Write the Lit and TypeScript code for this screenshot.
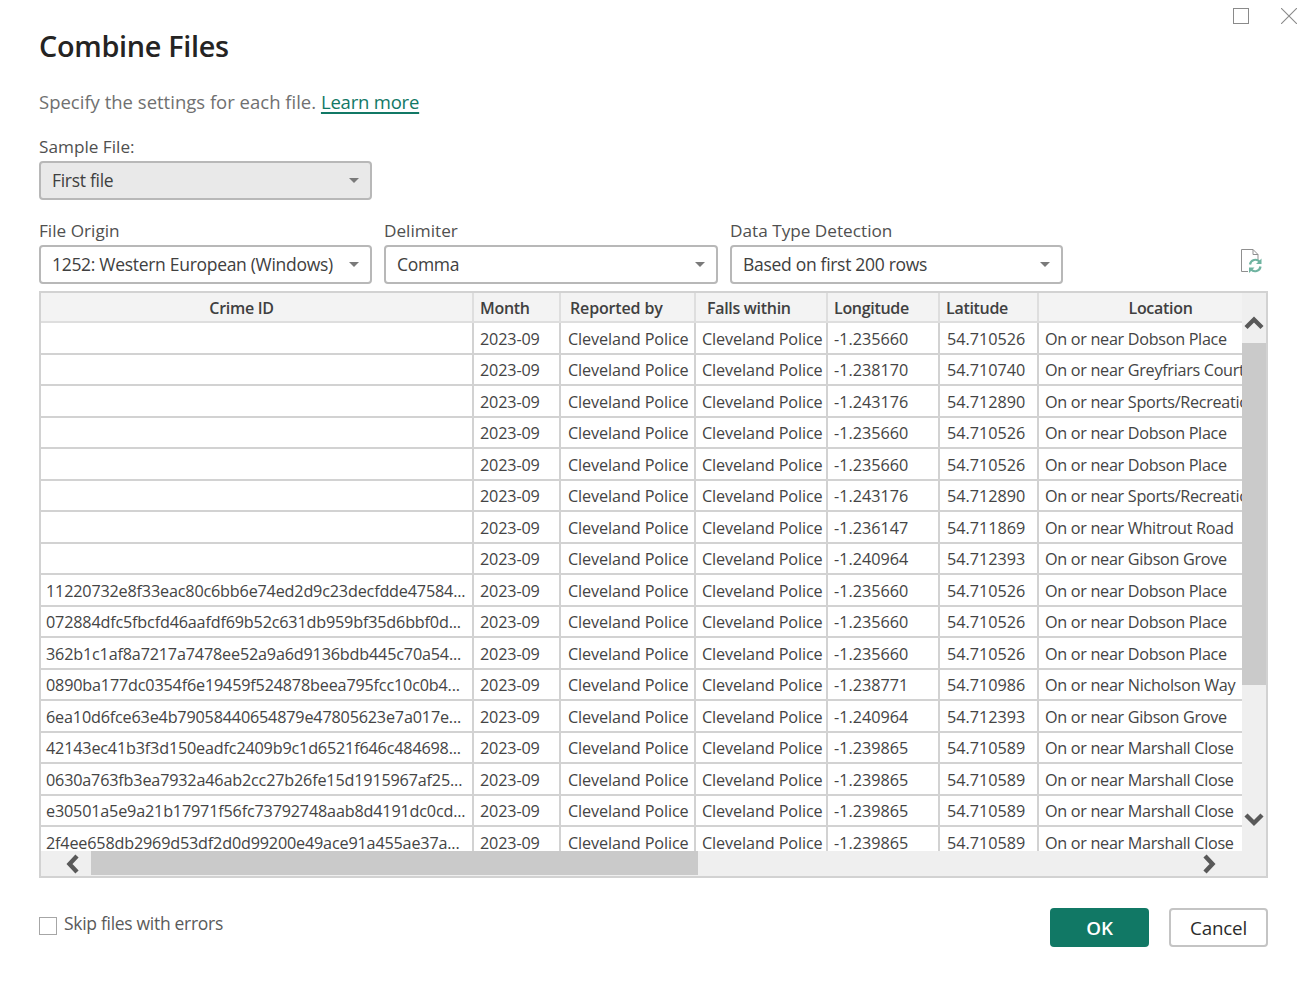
import { LitElement, css, html, svg } from "lit";
import { customElement } from "lit/decorators.js";

type Row = { id: string; lon: string; lat: string; loc: string };

const DOBSON = "On or near Dobson Place";
const GIBSON = "On or near Gibson Grove";
const SPORTS = "On or near Sports/Recreation Area";
const MARSHALL = "On or near Marshall Close";

const rows: Row[] = [
  { id: "", lon: "-1.235660", lat: "54.710526", loc: DOBSON },
  { id: "", lon: "-1.238170", lat: "54.710740", loc: "On or near Greyfriars Court" },
  { id: "", lon: "-1.243176", lat: "54.712890", loc: SPORTS },
  { id: "", lon: "-1.235660", lat: "54.710526", loc: DOBSON },
  { id: "", lon: "-1.235660", lat: "54.710526", loc: DOBSON },
  { id: "", lon: "-1.243176", lat: "54.712890", loc: SPORTS },
  { id: "", lon: "-1.236147", lat: "54.711869", loc: "On or near Whitrout Road" },
  { id: "", lon: "-1.240964", lat: "54.712393", loc: GIBSON },
  { id: "11220732e8f33eac80c6bb6e74ed2d9c23decfdde47584...", lon: "-1.235660", lat: "54.710526", loc: DOBSON },
  { id: "072884dfc5fbcfd46aafdf69b52c631db959bf35d6bbf0d...", lon: "-1.235660", lat: "54.710526", loc: DOBSON },
  { id: "362b1c1af8a7217a7478ee52a9a6d9136bdb445c70a54...", lon: "-1.235660", lat: "54.710526", loc: DOBSON },
  { id: "0890ba177dc0354f6e19459f524878beea795fcc10c0b4...", lon: "-1.238771", lat: "54.710986", loc: "On or near Nicholson Way" },
  { id: "6ea10d6fce63e4b79058440654879e47805623e7a017e...", lon: "-1.240964", lat: "54.712393", loc: GIBSON },
  { id: "42143ec41b3f3d150eadfc2409b9c1d6521f646c484698...", lon: "-1.239865", lat: "54.710589", loc: MARSHALL },
  { id: "0630a763fb3ea7932a46ab2cc27b26fe15d1915967af25...", lon: "-1.239865", lat: "54.710589", loc: MARSHALL },
  { id: "e30501a5e9a21b17971f56fc73792748aab8d4191dc0cd...", lon: "-1.239865", lat: "54.710589", loc: MARSHALL },
  { id: "2f4ee658db2969d53df2d0d99200e49ace91a455ae37a...", lon: "-1.239865", lat: "54.710589", loc: MARSHALL },
];

const caret = html`<svg class="caret" width="10" height="5" viewBox="0 0 10 5"><path d="M0 0h10L5 5z" fill="#7a7a7a"/></svg>`;

const chevron = (d: string) =>
  svg`<svg width="20" height="20" viewBox="0 0 20 20"><path d=${d} fill="none" stroke="#595959" stroke-width="4.4"/></svg>`;

@customElement("app-root")
export class AppRoot extends LitElement {
  static styles = css`
    :host {
      display: block;
      width: 1304px;
      height: 982px;
      box-sizing: border-box;
      padding: 8px 36px 0 39px;
      background: #fff;
      color: #333;
      font-family: "Open Sans", "Noto Sans", sans-serif;
      font-size: 17px;
      position: relative;
      overflow: hidden;
    }

    .winbar {
      display: flex;
      justify-content: flex-end;
      gap: 32px;
      height: 16px;
      margin-right: -29px;
    }

    h1 {
      margin: 3px 0 0;
      font-size: 28.8px;
      font-weight: 600;
      line-height: 38px;
      color: #252423;
      letter-spacing: -0.3px;
    }

    .hint {
      margin-top: 24px;
      line-height: 26px;
      font-size: 18.5px;
      color: #707070;
    }

    .hint a {
      color: #117865;
      letter-spacing: -0.2px;
      text-decoration: underline 2px #117865;
      text-underline-offset: 3px;
    }

    .label {
      display: block;
      line-height: 22px;
      font-size: 17.2px;
      color: #505050;
      margin-bottom: 3px;
    }

    .sample {
      margin-top: 21px;
      width: 333px;
    }

    .select {
      box-sizing: border-box;
      height: 39px;
      width: 333px;
      border: 2px solid #b8b8b8;
      border-radius: 4px;
      padding: 0 11px 2px;
      display: flex;
      align-items: center;
      justify-content: space-between;
      font-size: 17.5px;
      color: #404040;
      letter-spacing: -0.3px;
      white-space: nowrap;
    }

    .select.off {
      background: #e9e9e9;
    }

    .caret {
      margin-top: 2px;
    }

    .options {
      margin-top: 20px;
      display: flex;
      align-items: flex-end;
      gap: 12px;
    }

    .options .wide {
      width: 334px;
    }

    .options .wide .select {
      width: 334px;
    }

    .refresh {
      margin-left: auto;
      margin-right: 4px;
      margin-bottom: 9px;
    }

    .table {
      margin-top: 7px;
      box-sizing: border-box;
      width: 1229px;
      height: 587px;
      border: 2px solid #d2d2d2;
      display: grid;
      grid-template-columns: 1fr 24px;
      grid-template-rows: 1fr 25px;
      background: #efefef;
    }

    .view {
      overflow: hidden;
      background: #fff;
    }

    .row {
      display: grid;
      grid-template-columns: 433px 87px 135px 132px 112px 99px 1fr;
      height: 31.5px;
      box-sizing: border-box;
      border-bottom: 2px solid #d2d2d2;
      font-size: 16.2px;
      line-height: 29px;
      color: #444;
    }

    .row.head {
      height: 30px;
      background: #f3f3f3;
      border-bottom: 2px solid #dedede;
      font-size: 16px;
      font-weight: 600;
      color: #404040;
      letter-spacing: -0.3px;
    }

    .cell {
      box-sizing: border-box;
      padding: 1.5px 0 0 6px;
      border-right: 2px solid #d2d2d2;
      overflow: hidden;
      white-space: nowrap;
    }

    .cell.hash {
      padding-left: 5px;
      letter-spacing: -0.18px;
    }

    .cell.month {
      letter-spacing: -0.15px;
    }

    .cell.force {
      padding-left: 7px;
      letter-spacing: -0.1px;
    }

    .cell.force + .cell.force {
      padding-left: 6px;
    }

    .cell.num {
      padding-left: 6px;
      letter-spacing: 0;
    }

    .cell.num + .cell.num {
      padding-left: 7px;
    }

    .cell.loc {
      border-right: 0;
      padding-left: 6px;
      letter-spacing: -0.3px;
    }

    .head .cell {
      border-right-color: #dedede;
      padding: 1px 0 0 6px;
    }

    .head .cell.id {
      text-align: center;
      padding-right: 36px;
    }

    .head .cell.reported {
      padding-left: 9px;
      letter-spacing: -0.15px;
    }

    .head .cell.falls {
      padding-left: 11px;
    }

    .head .cell.where {
      border-right: 0;
      text-align: center;
      padding-left: 40px;
    }

    .vbar {
      display: flex;
      flex-direction: column;
      align-items: center;
    }

    .vbar .thumb {
      width: 100%;
      height: 342px;
      background: #cacaca;
      flex: none;
    }

    .vbar .up {
      height: 50px;
      flex: none;
      display: flex;
      align-items: flex-end;
      padding-bottom: 10px;
      box-sizing: border-box;
    }

    .vbar .down {
      flex: 1;
      display: flex;
      align-items: flex-end;
      padding-bottom: 22px;
    }

    .hbar {
      display: flex;
      align-items: stretch;
    }

    .hbar .left {
      width: 50px;
      flex: none;
      display: flex;
      align-items: center;
      justify-content: center;
      padding-left: 13px;
      box-sizing: border-box;
    }

    .hbar .thumb {
      width: 607px;
      flex: none;
      background: #cacaca;
      margin-bottom: 1px;
    }

    .hbar .right {
      flex: 1;
      display: flex;
      align-items: center;
      justify-content: flex-end;
      padding-right: 23px;
    }

    .footer {
      margin-top: 30px;
      display: flex;
      align-items: center;
      width: 1229px;
    }

    .check {
      display: flex;
      align-items: center;
      gap: 7px;
      font-size: 17.5px;
      color: #5a5a5a;
      letter-spacing: -0.3px;
      margin-top: -9px;
    }

    .box {
      width: 18px;
      height: 18px;
      box-sizing: border-box;
      border: 1px solid #a6a6a6;
      margin-top: 5px;
    }

    .buttons {
      margin-left: auto;
      display: flex;
      gap: 20px;
    }

    .btn {
      box-sizing: border-box;
      width: 99px;
      height: 39px;
      border-radius: 4px;
      display: flex;
      align-items: center;
      justify-content: center;
      font-size: 18.8px;
      font-weight: 500;
      letter-spacing: -0.2px;
    }

    .btn.primary {
      background: #117865;
      color: #fff;
      font-weight: 600;
    }

    .btn.plain {
      border: 2px solid #c4c4c4;
      color: #2b2b2b;
    }
  `;

  renderRow(r: Row) {
    return html`<div class="row">
      <div class="cell hash">${r.id}</div>
      <div class="cell month">2023-09</div>
      <div class="cell force">Cleveland Police</div>
      <div class="cell force">Cleveland Police</div>
      <div class="cell num">${r.lon}</div>
      <div class="cell num">${r.lat}</div>
      <div class="cell loc">${r.loc}</div>
    </div>`;
  }

  render() {
    return html`
      <div class="winbar">
        <svg width="16" height="16" viewBox="0 0 16 16"><rect x="0.5" y="0.5" width="15" height="15" fill="none" stroke="#8a8a8a"/></svg>
        <svg width="16" height="16" viewBox="0 0 16 16"><path d="M0 0l16 16M16 0L0 16" stroke="#8a8a8a" stroke-width="1.1"/></svg>
      </div>
      <h1>Combine Files</h1>
      <div class="hint">Specify the settings for each file. <a>Learn more</a></div>

      <div class="sample">
        <span class="label">Sample File:</span>
        <div class="select off"><span>First file</span>${caret}</div>
      </div>

      <div class="options">
        <div>
          <span class="label">File Origin</span>
          <div class="select"><span>1252: Western European (Windows)</span>${caret}</div>
        </div>
        <div class="wide">
          <span class="label">Delimiter</span>
          <div class="select"><span>Comma</span>${caret}</div>
        </div>
        <div>
          <span class="label">Data Type Detection</span>
          <div class="select"><span>Based on first 200 rows</span>${caret}</div>
        </div>
        <svg class="refresh" width="24" height="26" viewBox="0 0 24 26">
          <path d="M8 22.5H1.5V.5H13l5 5v5M13 .5v5h5" fill="none" stroke="#8f8f8f" stroke-width="1"/>
          <path d="M10 15.5a5.5 5.5 0 0 1 9.6-2.8M20.5 17.5a5.5 5.5 0 0 1-9.6 2.8" fill="none" stroke="#6fb3a0" stroke-width="2.2"/>
          <path d="M21.5 9.5v5.5h-5.5zM9 24v-5.5h5.5z" fill="#6fb3a0"/>
        </svg>
      </div>

      <div class="table">
        <div class="view">
          <div class="row head">
            <div class="cell id">Crime ID</div>
            <div class="cell">Month</div>
            <div class="cell reported">Reported by</div>
            <div class="cell falls">Falls within</div>
            <div class="cell">Longitude</div>
            <div class="cell">Latitude</div>
            <div class="cell where">Location</div>
          </div>
          ${rows.map((r) => this.renderRow(r))}
        </div>
        <div class="vbar">
          <div class="up">${chevron("M2 14.5l8-8 8 8")}</div>
          <div class="thumb"></div>
          <div class="down">${chevron("M2 6l8 8 8-8")}</div>
        </div>
        <div class="hbar">
          <div class="left">${chevron("M14 2l-7.5 8 7.5 8")}</div>
          <div class="thumb"></div>
          <div class="right">${chevron("M6 2l7.5 8-7.5 8")}</div>
        </div>
        <div></div>
      </div>

      <div class="footer">
        <div class="check"><span class="box"></span><span>Skip files with errors</span></div>
        <div class="buttons">
          <div class="btn primary">OK</div>
          <div class="btn plain">Cancel</div>
        </div>
      </div>
    `;
  }
}
